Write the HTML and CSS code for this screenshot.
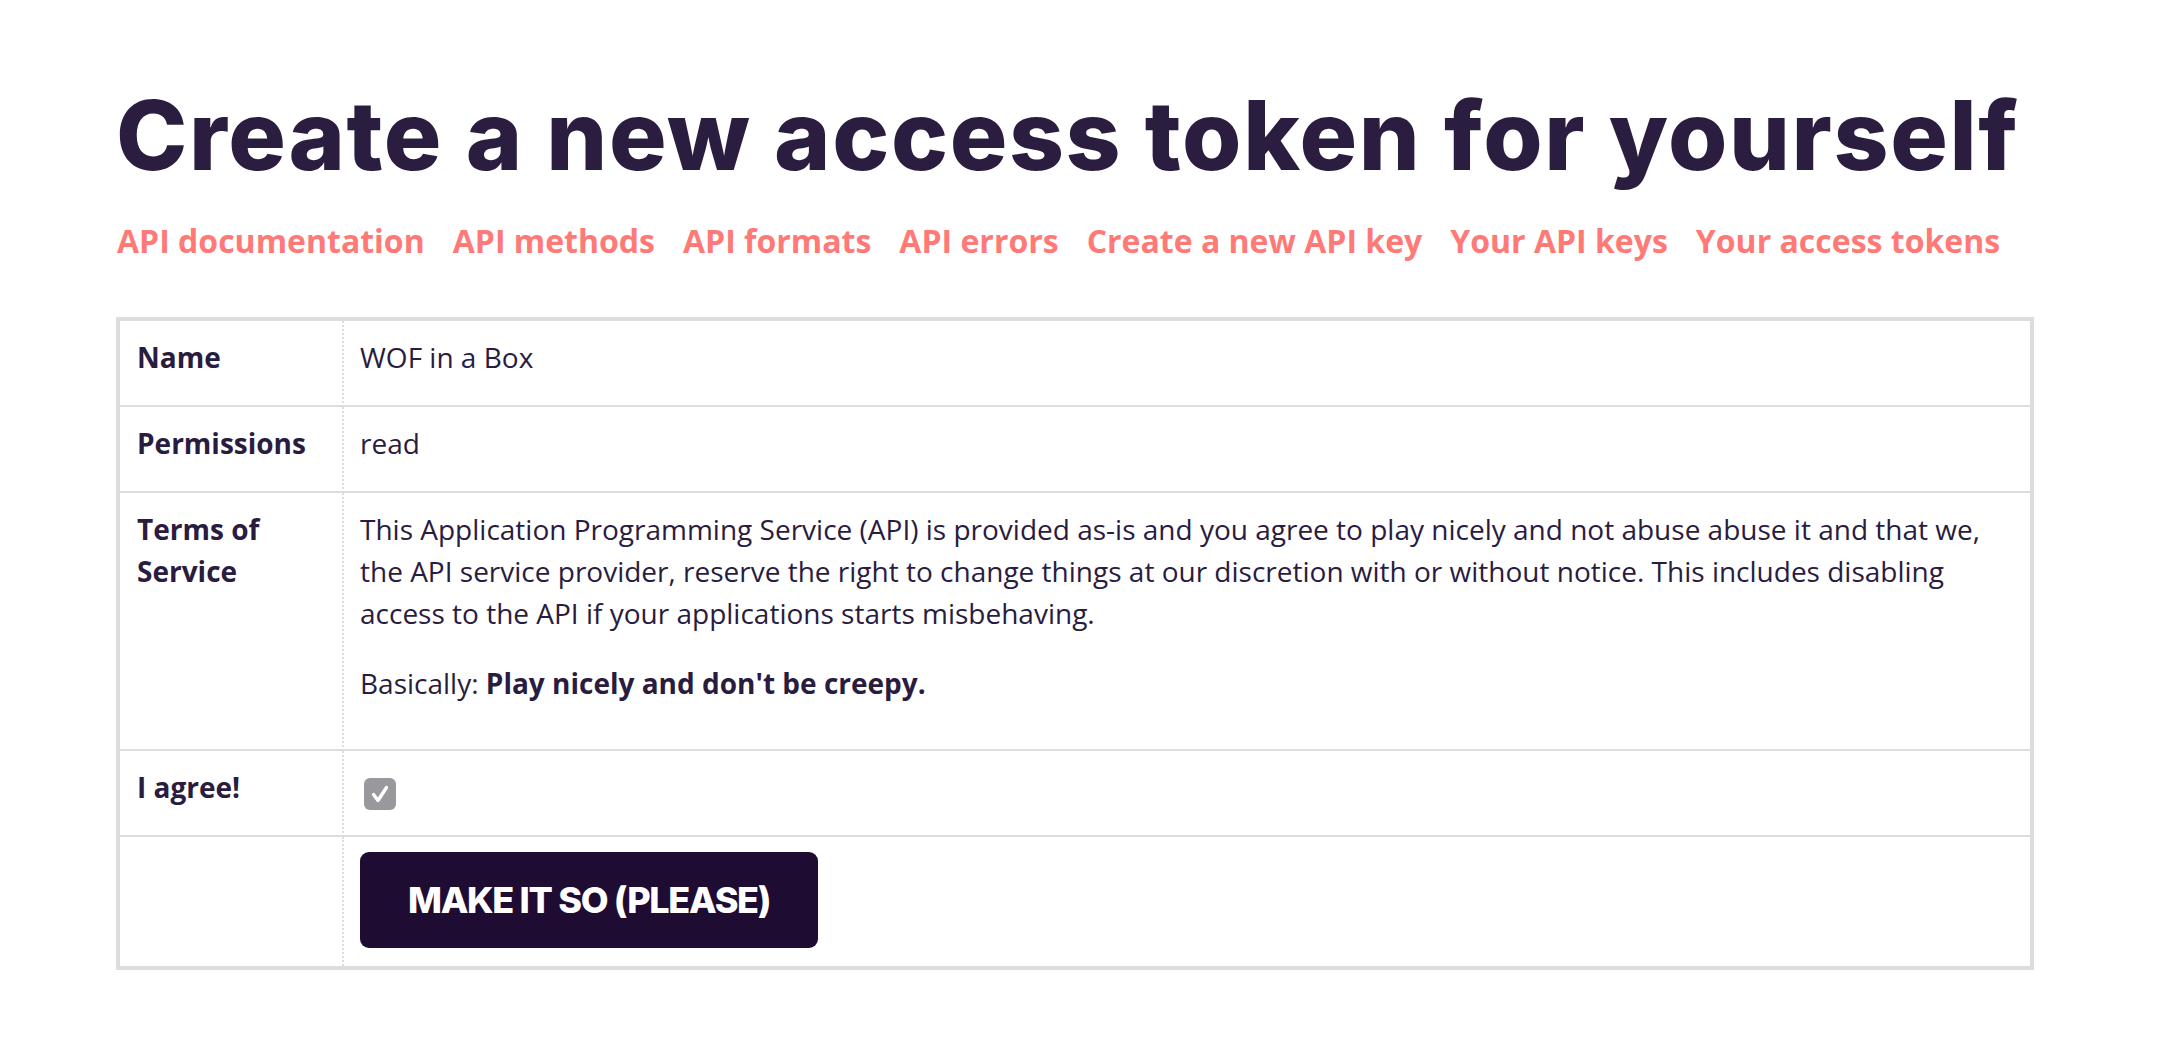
FILE: index.html
```html
<!DOCTYPE html>
<html lang="en">
<head>
<meta charset="utf-8">
<title>Create a new access token for yourself</title>
<link rel="stylesheet" href="styles.css">
</head>
<body>
<main class="page">
  <h1 class="title">Create a new access token for yourself</h1>
  <nav class="nav">
    <a href="#">API documentation</a>
    <a href="#">API methods</a>
    <a href="#">API formats</a>
    <a href="#">API errors</a>
    <a href="#">Create a new API key</a>
    <a href="#">Your API keys</a>
    <a href="#">Your access tokens</a>
  </nav>
  <form class="form">
    <table class="grid">
      <tr>
        <th class="label">Name</th>
        <td class="value">WOF in a Box</td>
      </tr>
      <tr>
        <th class="label">Permissions</th>
        <td class="value">read</td>
      </tr>
      <tr>
        <th class="label">Terms of Service</th>
        <td class="value tos">
          <p>This Application Programming Service (API) is provided as-is and you agree to play nicely and not abuse abuse it and that we, the API service provider, reserve the right to change things at our discretion with or without notice. This includes disabling access to the API if your applications starts misbehaving.</p>
          <p>Basically: <strong>Play nicely and don't be creepy.</strong></p>
        </td>
      </tr>
      <tr>
        <th class="label">I agree!</th>
        <td class="value agree">
          <span class="check"><svg width="32" height="32" viewBox="0 0 32 32"><path d="M9.5 16.5 L14 22.5 L22.5 9.5" fill="none" stroke="#fff" stroke-width="3.4" stroke-linecap="round" stroke-linejoin="round"/></svg></span>
        </td>
      </tr>
      <tr class="last">
        <th class="label"></th>
        <td class="value submit">
          <button type="button" class="btn">MAKE IT SO (PLEASE)</button>
        </td>
      </tr>
    </table>
  </form>
</main>
</body>
</html>
```

FILE: styles.css
```css
html, body {
  margin: 0;
  padding: 0;
  background: #ffffff;
}

body {
  font-family: "Open Sans", "Liberation Sans", sans-serif;
  color: #2a1c3f;
}

.page {
  margin-left: 116px;
  width: 1918px;
  padding-top: 75px;
}

.title {
  margin: 0;
  font-family: Inter, "Liberation Sans", sans-serif;
  font-weight: 800;
  font-size: 96px;
  line-height: 120px;
  letter-spacing: 1.6px;
  color: #2b1d40;
  white-space: nowrap;
}

.nav {
  display: flex;
  gap: 28px;
  margin-top: 24px;
  padding-left: 1px;
}

.nav a {
  font-family: "Open Sans", "Liberation Sans", sans-serif;
  font-weight: 700;
  font-size: 32px;
  line-height: 44px;
  color: #ff7a77;
  text-decoration: none;
  white-space: nowrap;
}

.form {
  margin-top: 54px;
}

.grid {
  width: 100%;
  border: 4px solid #dddddd;
  border-collapse: separate;
  border-spacing: 0;
  font-size: 28px;
  line-height: 42px;
}

.grid th,
.grid td {
  border-bottom: 2px solid #dddddd;
  padding: 15px 16px 27px;
  vertical-align: top;
  text-align: left;
}

.grid tr.last th,
.grid tr.last td {
  border-bottom: 0;
}

.grid th.label {
  width: 189px;
  padding-left: 17px;
  font-weight: 700;
  color: #2a1c3f;
}

.grid td.value {
  border-left: 2px dotted #dddddd;
  font-weight: 400;
  color: #2a1c3f;
}

.grid td.tos {
  padding-bottom: 45px;
}

.tos p {
  margin: 0 0 28px;
}

.tos p:last-child {
  margin-bottom: 0;
}

.grid td.agree {
  padding-top: 27px;
  padding-bottom: 23px;
  line-height: 32px;
}

.check {
  display: block;
  width: 32px;
  height: 32px;
  margin-left: 4px;
  border-radius: 6px;
  background: #99989d;
}

.check svg {
  display: block;
}

.grid td.submit {
  padding-top: 15px;
  padding-bottom: 18px;
}

.btn {
  display: flex;
  align-items: center;
  height: 96px;
  padding: 0 48px;
  border: 0;
  border-radius: 9px;
  background: #1f0c33;
  color: #ffffff;
  font-family: Inter, "Liberation Sans", sans-serif;
  font-weight: 800;
  font-size: 36px;
  letter-spacing: -1.3px;
  cursor: pointer;
}
```
